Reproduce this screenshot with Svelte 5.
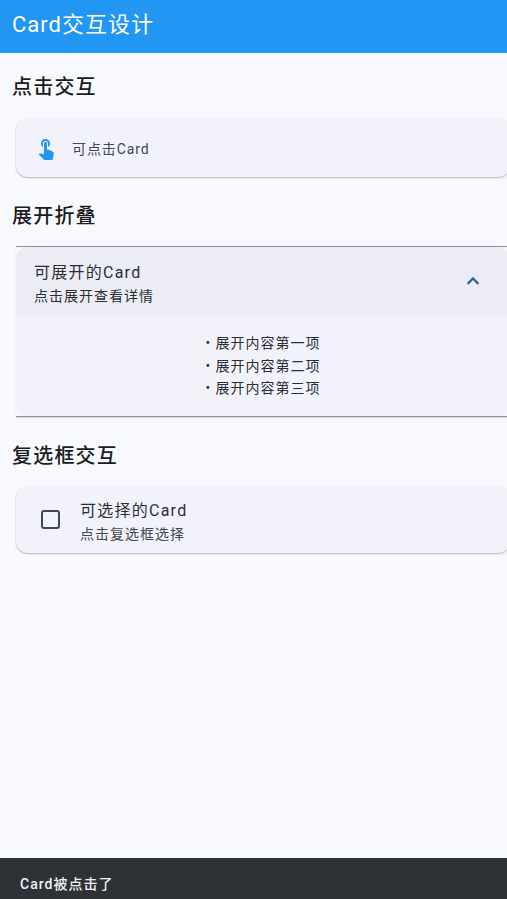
<script>
  let expanded = $state(true);
  let checked = $state(false);
  let snack = $state('Card被点击了');

  const items = ['展开内容第一项', '展开内容第二项', '展开内容第三项'];
</script>

<div class="page">
  <header class="appbar">Card交互设计</header>

  <main class="content">
    <h2>点击交互</h2>
    <button type="button" class="card tap" onclick={() => (snack = 'Card被点击了')}>
      <svg class="touch" viewBox="0 0 24 24" width="24" height="24" aria-hidden="true">
        <path d="M9 11.24V7.5C9 6.12 10.12 5 11.5 5S14 6.12 14 7.5v3.74c1.21-.81 2-2.18 2-3.74C16 5.01 13.99 3 11.5 3S7 5.01 7 7.5c0 1.56.79 2.93 2 3.74zm9.84 4.63l-4.54-2.26c-.17-.07-.35-.11-.54-.11H13v-6c0-.83-.67-1.5-1.5-1.5S10 6.67 10 7.5v10.74l-3.43-.72c-.08-.01-.15-.03-.24-.03-.31 0-.59.13-.79.33l-.79.8 4.94 4.94c.27.27.65.44 1.06.44h6.79c.75 0 1.33-.55 1.44-1.28l.75-5.27c.01-.07.02-.14.02-.2 0-.62-.38-1.16-.91-1.38z" />
      </svg>
      <span>可点击Card</span>
    </button>

    <h2>展开折叠</h2>
    <div class="expand">
      <div class="expand-card">
        <button type="button" class="expand-head" onclick={() => (expanded = !expanded)}>
          <span class="texts">
            <span class="title">可展开的Card</span>
            <span class="sub dark">点击展开查看详情</span>
          </span>
          <svg class="chevron" class:closed={!expanded} viewBox="0 0 24 24" width="24" height="24" aria-hidden="true">
            <path d="M7.41 15.41 12 10.83l4.59 4.58L18 14l-6-6-6 6z" />
          </svg>
        </button>
        {#if expanded}
          <div class="expand-body">
            {#each items as item}
              <div>• {item}</div>
            {/each}
          </div>
        {/if}
      </div>
    </div>

    <h2>复选框交互</h2>
    <button type="button" class="card check" onclick={() => (checked = !checked)}>
      <span class="box" class:checked></span>
      <span class="texts">
        <span class="title">可选择的Card</span>
        <span class="sub">点击复选框选择</span>
      </span>
    </button>
  </main>

  <div class="snackbar">{snack}</div>
</div>

<style>
  :global(body) {
    margin: 0;
    background: #f8f9ff;
    font-family: Roboto, "Noto Sans CJK SC", sans-serif;
  }

  button {
    font: inherit;
    color: inherit;
    border: none;
    padding: 0;
    text-align: left;
    cursor: pointer;
  }

  .page {
    height: 899px;
    display: flex;
    flex-direction: column;
    overflow: hidden;
    color: #191c20;
  }

  .appbar {
    height: 53px;
    flex-shrink: 0;
    box-sizing: border-box;
    padding: 10px 12px 0;
    background: #2196f3;
    color: #fff;
    font-size: 22px;
    line-height: 30px;
    letter-spacing: 1px;
  }

  .content {
    flex: 1;
    padding: 0 0 0 12px;
  }

  h2 {
    margin: 0;
    font-size: 20px;
    font-weight: 500;
    line-height: 28px;
    letter-spacing: 1.2px;
    color: #191c20;
  }

  h2:nth-of-type(1) { padding-top: 20px; }
  h2:nth-of-type(2) { padding-top: 25px; }
  h2:nth-of-type(3) { padding-top: 25px; }

  .card {
    display: flex;
    box-sizing: border-box;
    margin-left: 4px;
    width: 494px;
    background: #f2f3fa;
    border-radius: 12px;
    box-shadow: 0 1px 2px rgba(0, 0, 0, 0.28);
  }

  .tap {
    align-items: center;
    height: 59px;
    margin-top: 17px;
    padding-left: 18px;
    gap: 14px;
    font-size: 14px;
    letter-spacing: 0.9px;
    color: #43474e;
  }

  .touch {
    fill: #2196f3;
    flex-shrink: 0;
  }

  /* divider lines stay square, the card corners sit inside them */
  .expand {
    box-sizing: border-box;
    margin: 16px 0 0 4px;
    width: 494px;
    height: 171px;
    border-top: 1px solid #8f9096;
    border-bottom: 1px solid #8f9096;
    box-shadow: 0 1px 1px rgba(0, 0, 0, 0.12);
  }

  .expand-card {
    height: 100%;
    overflow: hidden;
    background: #f2f3fa;
    border-radius: 12px;
  }

  .expand-head {
    display: flex;
    align-items: center;
    justify-content: space-between;
    width: 100%;
    height: 68px;
    box-sizing: border-box;
    padding: 0 25px 0 18px;
    background: #ecedf4;
  }

  .expand-head .texts {
    padding-top: 7px;
  }

  .expand-head .sub {
    line-height: 23px;
  }

  .texts {
    display: flex;
    flex-direction: column;
    padding-top: 4px;
  }

  .title {
    font-size: 16px;
    line-height: 24px;
    letter-spacing: 1.25px;
    color: #2b2d33;
  }

  .sub {
    font-size: 14px;
    line-height: 22px;
    letter-spacing: 1px;
    color: #43474e;
  }

  .sub.dark {
    color: #2b2d33;
  }

  .chevron {
    fill: #2d6197;
    stroke: #2d6197;
    stroke-width: 0.4;
  }

  .chevron.closed {
    transform: rotate(180deg);
  }

  .expand-body {
    padding-top: 17px;
    font-size: 14px;
    line-height: 22.7px;
    letter-spacing: 1px;
    text-align: center;
    color: #2b2d33;
  }

  .check {
    align-items: center;
    height: 67px;
    margin-top: 16px;
    padding-left: 25px;
    gap: 20px;
  }

  .box {
    width: 15px;
    height: 15px;
    flex-shrink: 0;
    border: 2.5px solid #43474e;
    border-radius: 3px;
  }

  .box.checked {
    background: #2196f3;
    border-color: #2196f3;
  }

  .snackbar {
    height: 41px;
    flex-shrink: 0;
    box-sizing: border-box;
    padding: 16px 20px 0;
    background: #2e3135;
    color: #f0f0f7;
    font-size: 14px;
    font-weight: 500;
    line-height: 20px;
    letter-spacing: 1px;
  }
</style>
